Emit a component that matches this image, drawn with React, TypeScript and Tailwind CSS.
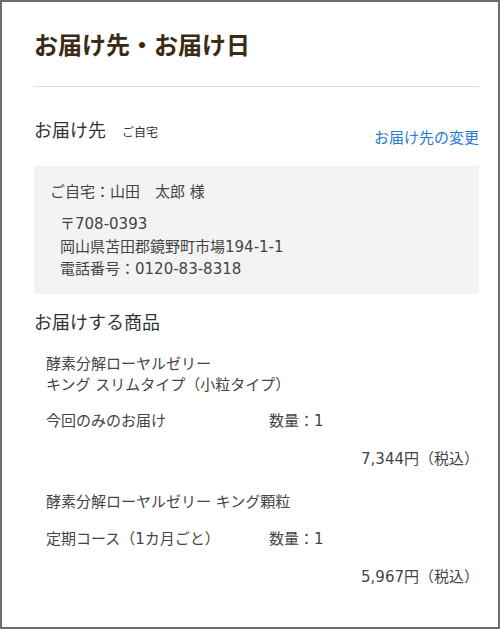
export default function App() {
  const font = { fontFamily: '"DejaVu Sans", "Noto Sans CJK JP", sans-serif' };
  return (
    <div
      className="w-[500px] h-[629px] border-2 border-[#6d6d6d] bg-white pl-[32px] pr-[19px] text-[#444]"
      style={font}
    >
      <h1 className="pt-[26px] pb-[22px] text-[24px] leading-[36px] font-bold text-[#3b2a14] border-b border-[#dcdcdc]">
        お届け先・お届け日
      </h1>

      <div className="flex items-start justify-between pt-[31px]">
        <div className="flex items-baseline">
          <span className="text-[18px] leading-[26px] text-[#333]">お届け先</span>
          <span className="ml-[16px] text-[12px] text-[#333]">ご自宅</span>
        </div>
        <a className="mt-[9px] text-[15px] leading-[22px] text-[#2a7ad2]">お届け先の変更</a>
      </div>

      <div className="mt-[17px] bg-[#f3f3f3] px-[16px] pt-[15px] pb-[13px] text-[15px]">
        <p className="leading-[22px]">ご自宅：山田　太郎 様</p>
        <div className="mt-[10px] pl-[10px] leading-[22.5px]">
          <p>〒708-0393</p>
          <p>岡山県苫田郡鏡野町市場194-1-1</p>
          <p>電話番号：0120-83-8318</p>
        </div>
      </div>

      <h2 className="mt-[16px] text-[18px] leading-[26px] text-[#333]">お届けする商品</h2>

      <div className="pl-[12px] text-[15px]">
        <div className="mt-[18px] leading-[21.5px]">
          <p>酵素分解ローヤルゼリー</p>
          <p>キング スリムタイプ（小粒タイプ）</p>
        </div>
        <div className="mt-[13px] flex leading-[22px]">
          <span className="w-[223px]">今回のみのお届け</span>
          <span>数量：1</span>
        </div>
        <p className="mt-[16px] text-right leading-[22px]">7,344円（税込）</p>

        <p className="mt-[21px] leading-[22px]">酵素分解ローヤルゼリー キング顆粒</p>
        <div className="mt-[15px] flex leading-[22px]">
          <span className="w-[223px]">定期コース（1カ月ごと）</span>
          <span>数量：1</span>
        </div>
        <p className="mt-[16px] text-right leading-[22px]">5,967円（税込）</p>
      </div>
    </div>
  );
}
